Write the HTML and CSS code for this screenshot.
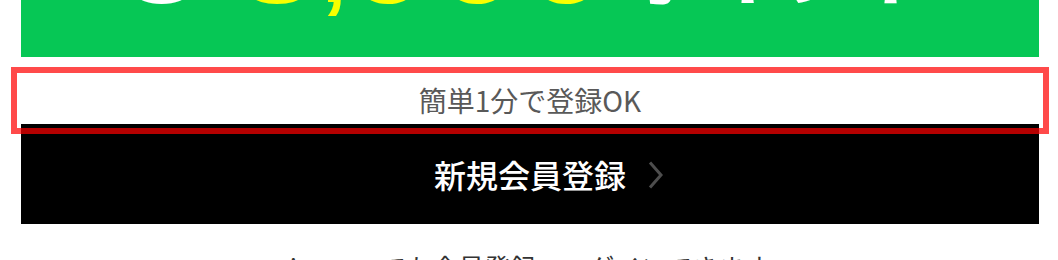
FILE: index.html
```html
<!DOCTYPE html>
<html lang="ja">
<head>
    <meta charset="UTF-8">
    <title>新規会員登録</title>
    <link rel="stylesheet" href="styles.css">
</head>
<body>
    <div class="page">
        <div class="banner">
            <p class="banner-copy"><span class="lead">o</span><span class="amount">3<span class="comma">,</span>000</span><span class="unit">ポイント</span></p>
        </div>

        <p class="caption highlight">簡単1分で登録OK</p>

        <a class="signup" href="#">
            <span class="signup-label">新規会員登録<svg class="chevron" width="16" height="28" viewBox="0 0 16 28"><polyline points="2,1.5 13,14 2,26.5" fill="none" stroke="#4d4d4d" stroke-width="3"/></svg></span>
        </a>

        <p class="note">icanvasでも会員登録・ログインできます</p>
    </div>
</body>
</html>
```

FILE: styles.css
```css
body { margin: 0; background: #fff; font-family: "Noto Sans CJK JP", "Noto Sans", sans-serif; }
.page { padding: 0 19px 0 21px; }

.banner { height: 57px; overflow: hidden; background-color: #06c755; }
.banner-copy {
    margin: -133px 0 0;
    padding-left: 92px;
    font-family: "Liberation Sans", "Noto Sans CJK JP", sans-serif;
    font-weight: bold;
    font-size: 160px;
    line-height: 1;
    white-space: nowrap;
    color: #fff;
}
.lead { margin-right: 22px; }
.amount { color: #f8ff00; }
.comma { margin: 0 -3px 0 0; font-size: 90px; }
.unit {
    margin-left: 16px;
    vertical-align: 2px;
    font-family: "Noto Sans CJK JP", sans-serif;
    font-size: 78px;
}

.caption {
    position: relative;
    margin: 20px 0 0;
    height: 47px;
    line-height: 47px;
    text-align: center;
    font-size: 28px;
    color: #595959;
}
.highlight::after {
    content: "";
    position: absolute;
    top: -10px; right: -10px; bottom: -10px; left: -10px;
    border: 6px solid rgba(255, 0, 0, 0.71);
    z-index: 1;
    pointer-events: none;
}

.signup {
    display: flex;
    align-items: center;
    justify-content: center;
    height: 100px;
    background-color: #000;
    color: #fff;
    text-decoration: none;
    font-size: 32px;
    font-weight: 500;
}
.signup-label { position: relative; }
.chevron { position: absolute; left: 100%; top: 50%; margin: -13px 0 0 22px; }

.note {
    margin: 23px 0 0;
    line-height: 1.5;
    text-align: center;
    font-size: 26px;
    color: #333;
}
```
